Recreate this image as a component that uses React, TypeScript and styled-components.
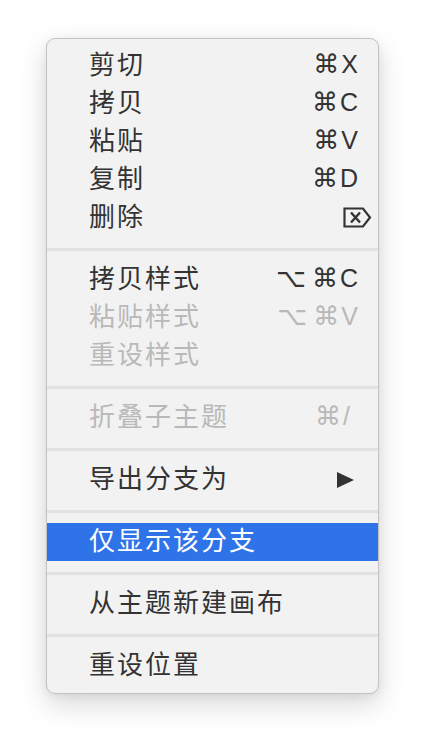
import * as React from "react";
import styled, {createGlobalStyle, css} from "styled-components";

const GlobalStyle = createGlobalStyle`
	html, body {
		margin: 0;
		padding: 0;
		background: #fff;
	}
`;

const Page = styled.div`
	padding: 38px 0 60px 46px;
`;

const Menu = styled.div`
	box-sizing: border-box;
	width: 333px;
	padding: 8px 0;
	background: #f2f2f2;
	border: 1px solid #c2c2c2;
	border-radius: 9px;
	box-shadow: 0 10px 28px rgba(0, 0, 0, 0.16), 0 2px 8px rgba(0, 0, 0, 0.06);
	overflow: hidden;
`;

interface IItemStyle {
	disabled?: boolean
	active?: boolean
}

const Item = styled.div<IItemStyle>`
	display: flex;
	align-items: center;
	justify-content: space-between;
	height: 38px;
	padding: 0 20px 0 42px;
	color: #333;
	${(props) => props.disabled && css`
		color: #b9b9b9;
	`}
	${(props) => props.active && css`
		background: #2f73e9;
		color: #fff;
	`}
`;

const Label = styled.span`
	font-family: "Noto Sans CJK SC", sans-serif;
	font-size: 26px;
	line-height: 32px;
	margin-bottom: 6px;
	letter-spacing: 2px;
`;

const Shortcut = styled.span`
	display: flex;
	align-items: center;
	font-family: "Liberation Sans", "DejaVu Sans", sans-serif;
	font-size: 25px;
	line-height: 32px;
	margin-bottom: 4px;
`;

interface IKeyStyle {
	wide?: boolean
}

const Key = styled.span<IKeyStyle>`
	font-family: "DejaVu Sans", sans-serif;
	font-size: 26px;
	margin-right: ${(props) => props.wide ? 6 : 2}px;
`;

const Separator = styled.div`
	height: 3px;
	margin: 10.5px 0;
	background: #e1e1e1;
`;

const DeleteIcon = () => (
	<svg width="29" height="21" viewBox="0 0 29 21" style={{marginRight: -14, marginTop: 2}}>
		<path d="M1.5 1.5 H20 L27 10.5 L20 19.5 H1.5 Z" fill="none" stroke="currentColor" strokeWidth="2.2" strokeLinejoin="miter"/>
		<path d="M8 5.5 L17 15.5 M17 5.5 L8 15.5" stroke="currentColor" strokeWidth="2.4"/>
	</svg>
);

const Arrow = () => (
	<svg width="17" height="16" viewBox="0 0 17 16" style={{marginRight: 4, marginTop: 4}}>
		<polygon points="0,0 17,8 0,16" fill="currentColor"/>
	</svg>
);

type Entry = {label: string, keys?: string[], disabled?: boolean, active?: boolean, icon?: "delete" | "arrow"} | "sep";

const entries: Entry[] = [
	{label: "剪切", keys: ["⌘", "X"]},
	{label: "拷贝", keys: ["⌘", "C"]},
	{label: "粘贴", keys: ["⌘", "V"]},
	{label: "复制", keys: ["⌘", "D"]},
	{label: "删除", icon: "delete"},
	"sep",
	{label: "拷贝样式", keys: ["⌥", "⌘", "C"]},
	{label: "粘贴样式", keys: ["⌥", "⌘", "V"], disabled: true},
	{label: "重设样式", disabled: true},
	"sep",
	{label: "折叠子主题", keys: ["⌘", "/"], disabled: true},
	"sep",
	{label: "导出分支为", icon: "arrow"},
	"sep",
	{label: "仅显示该分支", active: true},
	"sep",
	{label: "从主题新建画布"},
	"sep",
	{label: "重设位置"},
];

const App = () => (
	<Page>
		<GlobalStyle/>
		<Menu>
			{entries.map((entry, i) => entry === "sep" ? (
				<Separator key={i}/>
			) : (
				<Item key={i} disabled={entry.disabled} active={entry.active}>
					<Label>{entry.label}</Label>
					<Shortcut>
						{entry.keys && entry.keys.map((k, j) => (k === "⌘" || k === "⌥")
							? <Key key={j} wide={k === "⌥"}>{k}</Key>
							: <span key={j} style={k === "/" ? {marginRight: 8} : undefined}>{k}</span>)}
						{entry.icon === "delete" && <DeleteIcon/>}
						{entry.icon === "arrow" && <Arrow/>}
					</Shortcut>
				</Item>
			))}
		</Menu>
	</Page>
);

export default App;
